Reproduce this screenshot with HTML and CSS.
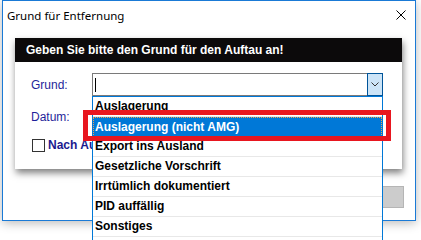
FILE: index.html
```html
<!DOCTYPE html>
<html>
<head>
<meta charset="UTF-8">
<title>Grund für Entfernung</title>
<link rel="stylesheet" href="styles.css">
</head>
<body>

    <div class="window">
        <div class="titlebar">
            <span class="title">Grund für Entfernung</span>
            <svg class="close" width="10" height="10" viewBox="0 0 10 10">
                <path d="M0.5 0.5 L9.5 9.5 M9.5 0.5 L0.5 9.5" stroke="#000" stroke-width="1" fill="none"/>
            </svg>
        </div>

        <div class="dialog">
            <div class="dialog-head">Geben Sie bitte den Grund für den Auftau an!</div>
            <div class="dialog-body">
                <div class="row">
                    <label class="label">Grund:</label>
                    <div class="combo">
                        <span class="caret"></span>
                        <span class="combo-btn">
                            <svg width="8" height="5" viewBox="0 0 8 5">
                                <path d="M0.5 0.5 L4 4 L7.5 0.5" stroke="#333" stroke-width="1" fill="none"/>
                            </svg>
                        </span>
                    </div>
                </div>
                <div class="row">
                    <label class="label">Datum:</label>
                </div>
                <div class="check-row">
                    <span class="checkbox"></span>
                    <span class="check-label">Nach Au</span>
                </div>
            </div>
        </div>

        <div class="footer">
            <div class="btn"></div>
        </div>

        <ul class="droplist">
            <li>Auslagerung</li>
            <li class="selected">Auslagerung (nicht AMG)</li>
            <li>Export ins Ausland</li>
            <li>Gesetzliche Vorschrift</li>
            <li>Irrtümlich dokumentiert</li>
            <li>PID auffällig</li>
            <li>Sonstiges</li>
            <li></li>
        </ul>

        <div class="highlight"></div>
    </div>

</body>
</html>
```

FILE: styles.css
```css
:root {
    --accent: #1a7ad6;
    --label: #1f1f9a;
    --select: #0078d7;
}
html, body {
    height: 240px;
    overflow: hidden;
}
body {
    margin: 0;
    background: #fff;
    font-family: "Liberation Sans", Arial, sans-serif;
    font-size: 12px;
}
.window {
    position: relative;
    margin-left: 2px;
    width: 412px;
    height: 219px;
    border: 1px solid var(--accent);
    background: #fff;
    box-shadow: 0 2px 10px rgba(0, 0, 0, .28);
}
.titlebar {
    height: 28px;
    display: flex;
    align-items: center;
    justify-content: space-between;
    padding: 0 9px 0 4px;
    color: #000;
}
.title {
    font-family: "Noto Sans", "Liberation Sans", sans-serif;
    font-size: 11.5px;
}
.close {
    display: block;
}
.dialog {
    margin: 9px 13px 0 12px;
    background: #fff;
    box-shadow: 1px 4px 7px rgba(0, 0, 0, .5);
}
.dialog-head {
    height: 24px;
    line-height: 24px;
    padding-left: 11px;
    background: #0c0a0b;
    color: #fff;
    font-weight: bold;
}
.dialog-body {
    height: 107px;
    padding: 11px 0 0 16px;
    box-sizing: border-box;
}
.row {
    display: flex;
    align-items: center;
    height: 23px;
    margin-bottom: 9px;
}
.label {
    width: 61px;
    color: var(--label);
}
.combo {
    width: 289px;
    height: 21px;
    border: 1px solid #7a7a7a;
    display: flex;
    align-items: center;
    justify-content: space-between;
    background: #fff;
}
.caret {
    width: 1px;
    height: 14px;
    margin-left: 2px;
    background: #000;
}
.combo-btn {
    width: 14px;
    height: 21px;
    margin-right: -1px;
    border: 1px solid #005499;
    background: #cce4f7;
    display: flex;
    align-items: center;
    justify-content: center;
}
.check-row {
    display: flex;
    align-items: center;
    height: 18px;
    margin-top: -1px;
    padding-left: 1px;
}
.checkbox {
    width: 11px;
    height: 11px;
    border: 1px solid #333;
    background: #fff;
}
.check-label {
    margin-left: 3px;
    color: #1a1a8e;
    font-weight: bold;
}
.footer {
    display: flex;
    justify-content: flex-end;
    margin: 17px 11px 0 0;
}
.btn {
    width: 73px;
    height: 20px;
    border: 1px solid #b5b5b5;
    background: #cccccc;
}
.droplist {
    position: absolute;
    left: 89px;
    top: 95px;
    width: 289px;
    height: 143px;
    margin: 0;
    padding: 0;
    list-style: none;
    border: 1px solid var(--select);
    border-bottom: 0;
    background: #fff;
    overflow: hidden;
    z-index: 5;
}
.droplist li {
    height: 19px;
    line-height: 19px;
    padding-left: 2px;
    border-bottom: 1px solid #e8e8e8;
    font-weight: bold;
    color: #000;
}
.droplist li.selected {
    background: var(--select);
    color: #fff;
    border: 1px dotted #f3a24d;
    height: 18px;
    line-height: 18px;
    padding-left: 1px;
}
.highlight {
    position: absolute;
    left: 80px;
    top: 109px;
    width: 298px;
    height: 21px;
    border: 5px solid #e8161f;
    z-index: 6;
}
```
